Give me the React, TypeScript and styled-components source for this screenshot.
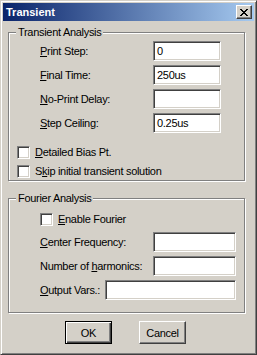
import React from 'react';
import styled, { createGlobalStyle } from 'styled-components';

const Global = createGlobalStyle`
  html, body { margin: 0; padding: 0; background: #d4d0c8; }
  body { font-family: 'Liberation Sans', Arial, sans-serif; font-size: 11px; color: #000; }
  * { box-sizing: border-box; }
`;

const Window = styled.div`
  width: 257px;
  height: 355px;
  background: #d4d0c8;
  border: 1px solid;
  border-color: #d4d0c8 #404040 #404040 #d4d0c8;
  box-shadow: inset 1px 1px #fff, inset -1px -1px #808080;
  padding: 2px;
  display: flex;
  flex-direction: column;
  letter-spacing: -0.3px;
`;

const TitleBar = styled.div`
  height: 18px;
  flex: none;
  background: linear-gradient(to right, #0a246a, #a6caf0);
  display: flex;
  align-items: center;
  justify-content: space-between;
  padding: 0 2px 0 3px;
  color: #fff;
  font-weight: bold;
  font-size: 11px;
  letter-spacing: 0;
`;

const CloseButton = styled.div`
  width: 16px;
  height: 14px;
  background: #d4d0c8;
  border: 1px solid;
  border-color: #fff #404040 #404040 #fff;
  box-shadow: inset -1px -1px #808080;
  display: flex;
  align-items: center;
  justify-content: center;
`;

const GroupBox = styled.div<{ $h: number; $top: number }>`
  margin: ${p => p.$top}px 9px 0 5px;
  height: ${p => p.$h}px;
  border: 1px solid #808080;
  box-shadow: inset 1px 1px #fff, 1px 1px #fff;
  display: flex;
  flex-direction: column;
`;

const Legend = styled.div`
  align-self: flex-start;
  margin: -7px 0 0 7px;
  padding: 0 2px;
  height: 13px;
  line-height: 13px;
  background: #d4d0c8;
  white-space: nowrap;
`;

const Rows = styled.div<{ $top: number; $left: number; $gap: number }>`
  display: flex;
  flex-direction: column;
  gap: ${p => p.$gap}px;
  margin: ${p => p.$top}px 0 0 ${p => p.$left}px;
`;

const FieldRow = styled.div<{ $label: number; $input: number }>`
  display: grid;
  grid-template-columns: ${p => p.$label}px ${p => p.$input}px;
  align-items: center;
  height: 20px;
`;

const Label = styled.span`
  white-space: nowrap;
  line-height: 13px;
`;

const TextBox = styled.div`
  height: 20px;
  background: #fff;
  border: 1px solid;
  border-color: #808080 #fff #fff #808080;
  box-shadow: inset 1px 1px #404040, inset -1px -1px #d4d0c8;
  padding: 0 3px;
  display: flex;
  align-items: center;
  white-space: nowrap;
  font-size: 11px;
`;

const CheckRow = styled.div`
  display: flex;
  align-items: center;
  gap: 5px;
  height: 13px;
`;

const CheckBox = styled.span`
  width: 13px;
  height: 13px;
  flex: none;
  background: #fff;
  border: 1px solid;
  border-color: #808080 #fff #fff #808080;
  box-shadow: inset 1px 1px #404040, inset -1px -1px #d4d0c8;
`;

const ButtonRow = styled.div`
  display: flex;
  gap: 27px;
  margin: 8px 0 0 62px;
`;

const Button = styled.div<{ $default?: boolean }>`
  width: 47px;
  height: 23px;
  display: flex;
  align-items: center;
  justify-content: center;
  background: #d4d0c8;
  border: 1px solid;
  border-color: ${p => (p.$default ? '#000' : '#fff #404040 #404040 #fff')};
  box-shadow: ${p =>
    p.$default
      ? 'inset 1px 1px #fff, inset -1px -1px #404040, inset -2px -2px #808080'
      : 'inset -1px -1px #808080'};
`;

const U = styled.span`
  text-decoration: underline;
`;

const CloseIcon = () => (
  <svg width="8" height="7" viewBox="0 0 8 7" shapeRendering="crispEdges">
    <path
      fill="#000"
      d="M0 0h2v1H0zM6 0h2v1H6zM1 1h2v1H1zM5 1h2v1H5zM2 2h4v1H2zM3 3h2v1H3zM2 4h4v1H2zM1 5h2v1H1zM5 5h2v1H5zM0 6h2v1H0zM6 6h2v1H6z"
    />
  </svg>
);

const fields1 = [
  { u: 'P', rest: 'rint Step:', value: '0' },
  { u: 'F', rest: 'inal Time:', value: '250us' },
  { u: 'N', rest: 'o-Print Delay:', value: '' },
  { u: 'S', rest: 'tep Ceiling:', value: '0.25us' },
];

export default function App() {
  return (
    <>
      <Global />
      <Window>
        <TitleBar>
          <span>Transient</span>
          <CloseButton>
            <CloseIcon />
          </CloseButton>
        </TitleBar>

        <GroupBox $top={11} $h={149}>
          <Legend>Transient Analysis</Legend>
          <Rows $top={2} $left={31} $gap={4}>
            {fields1.map(f => (
              <FieldRow key={f.u} $label={113} $input={68}>
                <Label>
                  <U>{f.u}</U>
                  {f.rest}
                </Label>
                <TextBox>{f.value}</TextBox>
              </FieldRow>
            ))}
          </Rows>
          <Rows $top={13} $left={8} $gap={6}>
            <CheckRow>
              <CheckBox />
              <Label>
                <U>D</U>etailed Bias Pt.
              </Label>
            </CheckRow>
            <CheckRow>
              <CheckBox />
              <Label>
                S<U>k</U>ip initial transient solution
              </Label>
            </CheckRow>
          </Rows>
        </GroupBox>

        <GroupBox $top={17} $h={115}>
          <Legend>Fourier Analysis</Legend>
          <Rows $top={8} $left={31} $gap={6}>
            <CheckRow>
              <CheckBox />
              <Label>
                <U>E</U>nable Fourier
              </Label>
            </CheckRow>
          </Rows>
          <Rows $top={6} $left={31} $gap={4}>
            <FieldRow $label={113} $input={83}>
              <Label>
                <U>C</U>enter Frequency:
              </Label>
              <TextBox />
            </FieldRow>
            <FieldRow $label={113} $input={83}>
              <Label>
                Number of <U>h</U>armonics:
              </Label>
              <TextBox />
            </FieldRow>
            <FieldRow $label={65} $input={131}>
              <Label>
                <U>O</U>utput Vars.:
              </Label>
              <TextBox />
            </FieldRow>
          </Rows>
        </GroupBox>

        <ButtonRow>
          <Button $default>OK</Button>
          <Button>Cancel</Button>
        </ButtonRow>
      </Window>
    </>
  );
}
